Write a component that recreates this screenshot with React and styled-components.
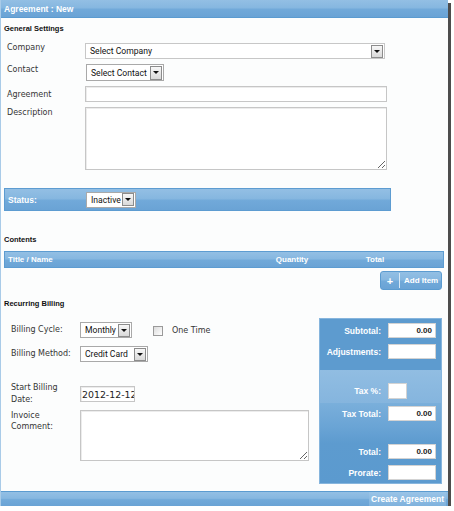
import React from 'react';
import styled, { createGlobalStyle } from 'styled-components';

const GlobalStyle = createGlobalStyle`
  html, body { margin: 0; padding: 0; background: #ffffff; }
  body { font-family: "DejaVu Sans", Verdana, sans-serif; }
  * { box-sizing: border-box; }
`;

const bar = `linear-gradient(to bottom, #93bfe4 0%, #86b7e0 45%, #71a9d9 55%, #6aa3d5 100%)`;

const Frame = styled.div`
  width: 448px;
  height: 506px;
  border-left: 1px solid #a9cbe8;
  background: #fcfdfd;
  display: flex;
  flex-direction: column;
  box-shadow: 3px 3px 0 #4d4d4d;
`;

const TitleBar = styled.div`
  flex: none;
  height: 18px;
  background: ${bar};
  border-bottom: 1px solid #5b9bd0;
  color: #fff;
  font: bold 8.5px "Liberation Sans", Arial, sans-serif;
  padding-left: 3px;
  display: flex;
  align-items: center;
`;

const Body = styled.div`
  flex: 1;
  display: flex;
  flex-direction: column;
  padding: 0 4px 0 3px;
`;

const SectionTitle = styled.div`
  margin-top: ${(p) => p.$mt}px;
  font: bold 7.5px "Liberation Sans", Arial, sans-serif;
  line-height: 10px;
  color: #111;
`;

const FieldRow = styled.div`
  display: flex;
  align-items: flex-start;
  margin-top: ${(p) => p.$mt}px;
  padding-left: ${(p) => p.$pl}px;
`;

const Label = styled.div`
  flex: none;
  width: ${(p) => p.$w}px;
  padding-top: ${(p) => p.$pt || 0}px;
  font-size: 8px;
  line-height: ${(p) => p.$lh || 10}px;
  color: #353535;
`;

const SelectBox = styled.div`
  flex: none;
  width: ${(p) => p.$w}px;
  height: ${(p) => p.$h || 16}px;
  margin-left: ${(p) => p.$ml || 0}px;
  border: 1px solid ${(p) => (p.$light ? '#c7c7c7' : '#a9a9a9')};
  background: #fff;
  display: flex;
  align-items: center;
  justify-content: space-between;
  padding: 0 1px 0 4px;
  font: 8.6px Roboto, "Liberation Sans", sans-serif;
  color: #111;
  white-space: nowrap;
  overflow: hidden;
`;

const ArrowBtn = styled.span`
  flex: none;
  width: 12px;
  height: ${(p) => p.$h || 13}px;
  border: 1px solid #8c8c8c;
  background: linear-gradient(to bottom, #f7f7f7, #d9d9d9);
  display: flex;
  align-items: center;
  justify-content: center;
  &::after {
    content: '';
    border-left: 3px solid transparent;
    border-right: 3px solid transparent;
    border-top: 3px solid #111;
  }
`;

const TextInput = styled.input`
  flex: none;
  width: ${(p) => p.$w}px;
  height: 16px;
  margin: ${(p) => p.$mt || 0}px 0 0 0;
  border: 1px solid #c6c6c6;
  box-shadow: inset 1px 1px 0 #ececec;
  background: #fff;
  padding: 0 0 0 1px;
  font: 9.4px "DejaVu Sans", Verdana, sans-serif;
  color: #222;
  outline: none;
`;

const TextArea = styled.textarea`
  flex: none;
  width: ${(p) => p.$w}px;
  height: ${(p) => p.$h}px;
  margin: 0;
  border: 1px solid #c6c6c6;
  box-shadow: inset 1px 1px 0 #ececec;
  background: #fff;
  outline: none;
`;

const StatusBar = styled.div`
  margin-top: 18px;
  width: 387px;
  height: 23px;
  border: 1px solid #5d9cd1;
  background: ${bar};
  display: flex;
  align-items: center;
  padding-left: 3px;
`;

const BarLabel = styled.span`
  flex: none;
  width: ${(p) => p.$w}px;
  color: #fff;
  font: bold 8.5px "Liberation Sans", Arial, sans-serif;
`;

const TableHead = styled.div`
  margin-top: 6px;
  height: 17px;
  border: 1px solid #5d9cd1;
  background: ${bar};
  display: grid;
  grid-template-columns: 252px 70px 13px 70px;
  align-items: center;
  color: #fff;
  font: bold 8px "Liberation Sans", Arial, sans-serif;
`;

const HeadCell = styled.span`
  text-align: ${(p) => p.$align || 'left'};
  padding-left: ${(p) => p.$pl || 0}px;
`;

const AddButton = styled.div`
  align-self: flex-end;
  margin: 3px 2px 0 0;
  width: 62px;
  height: 19px;
  border: 1px solid #5b9bd0;
  border-radius: 3px;
  background: ${bar};
  display: flex;
  align-items: center;
  color: #fff;
  font: bold 8px "Liberation Sans", Arial, sans-serif;
`;

const Plus = styled.span`
  width: 18px;
  text-align: center;
  font-size: 11px;
`;

const Divider = styled.span`
  width: 1px;
  height: 15px;
  background: #d7e8f6;
`;

const AddText = styled.span`
  padding-left: 4px;
  white-space: nowrap;
`;

const Billing = styled.div`
  margin-top: 9px;
  display: flex;
  align-items: flex-start;
`;

const BillingLeft = styled.div`
  flex: 1;
  display: flex;
  flex-direction: column;
`;

const CheckBox = styled.span`
  flex: none;
  width: 10px;
  height: 10px;
  margin: 4px 0 0 21px;
  border: 1px solid #9a9a9a;
  background: linear-gradient(135deg, #dcdcdc, #ffffff);
`;

const CheckLabel = styled.span`
  margin: 4px 0 0 9px;
  font-size: 8px;
  line-height: 10px;
  color: #353535;
`;

const Totals = styled.div`
  flex: none;
  width: 123px;
  height: 166px;
  margin-right: 2px;
  border: 1px solid #86b5dd;
  display: flex;
  flex-direction: column;
`;

const TotSection = styled.div`
  flex: none;
  height: ${(p) => p.$h}px;
  padding-top: ${(p) => p.$pt}px;
  background: ${(p) => p.$bg};
  display: flex;
  flex-direction: column;
`;

const TotRow = styled.div`
  display: flex;
  justify-content: flex-end;
  align-items: center;
  gap: 7px;
  padding-right: 5px;
  margin-top: ${(p) => p.$mt || 0}px;
`;

const TotLabel = styled.span`
  color: #fff;
  font: bold 8.5px "Liberation Sans", Arial, sans-serif;
`;

const TotInput = styled.div`
  width: ${(p) => p.$w || 48}px;
  height: ${(p) => p.$h || 15}px;
  margin-right: ${(p) => p.$mr || 0}px;
  background: #fff;
  border: 1px solid #d3d3d3;
  text-align: right;
  padding-right: 3px;
  font: bold 8px "Liberation Sans", Arial, sans-serif;
  line-height: 13px;
  color: #222;
`;

const Footer = styled.div`
  flex: none;
  height: 15px;
  background: ${bar};
  border-top: 1px solid #5b9bd0;
  display: flex;
  justify-content: flex-end;
`;

const CreateBtn = styled.div`
  height: 100%;
  padding: 0 2px;
  margin-right: 2px;
  background: linear-gradient(to bottom, #9ac4e7, #7fb2dd);
  color: #fff;
  font: bold 8.5px "Liberation Sans", Arial, sans-serif;
  display: flex;
  align-items: center;
`;

function Select({ text, w, h, ml, light, arrowH }) {
  return (
    <SelectBox $w={w} $h={h} $ml={ml} $light={light}>
      <span>{text}</span>
      <ArrowBtn $h={arrowH} />
    </SelectBox>
  );
}

export default function App() {
  return (
    <>
      <GlobalStyle />
      <Frame>
        <TitleBar>Agreement : New</TitleBar>
        <Body>
          <SectionTitle $mt={6}>General Settings</SectionTitle>
          <FieldRow $mt={9} $pl={3}>
            <Label $w={78}>Company</Label>
            <Select text="Select Company" w={300} light />
          </FieldRow>
          <FieldRow $mt={5} $pl={3}>
            <Label $w={78} $pt={1}>Contact</Label>
            <Select text="Select Contact" w={78} h={17} ml={1} arrowH={14} />
          </FieldRow>
          <FieldRow $mt={5} $pl={3}>
            <Label $w={78} $pt={4}>Agreement</Label>
            <TextInput $w={302} readOnly value="" />
          </FieldRow>
          <FieldRow $mt={5} $pl={3}>
            <Label $w={78} $pt={1}>Description</Label>
            <TextArea $w={302} $h={63} readOnly value="" />
          </FieldRow>

          <StatusBar>
            <BarLabel $w={78}>Status:</BarLabel>
            <Select text="Inactive" w={50} />
          </StatusBar>

          <SectionTitle $mt={24}>Contents</SectionTitle>
          <TableHead>
            <HeadCell $pl={3}>Title / Name</HeadCell>
            <HeadCell $align="center">Quantity</HeadCell>
            <span />
            <HeadCell $align="center">Total</HeadCell>
          </TableHead>
          <AddButton>
            <Plus>+</Plus>
            <Divider />
            <AddText>Add Item</AddText>
          </AddButton>

          <SectionTitle $mt={9}>Recurring Billing</SectionTitle>
          <Billing>
            <BillingLeft>
              <FieldRow $mt={4} $pl={7}>
                <Label $w={69} $pt={3}>Billing Cycle:</Label>
                <Select text="Monthly" w={52} />
                <CheckBox />
                <CheckLabel>One Time</CheckLabel>
              </FieldRow>
              <FieldRow $mt={8} $pl={7}>
                <Label $w={69} $pt={3}>Billing Method:</Label>
                <Select text="Credit Card" w={68} />
              </FieldRow>
              <FieldRow $mt={20} $pl={7}>
                <Label $w={69} $lh={12}>Start Billing<br />Date:</Label>
                <TextInput $w={55} $mt={4} readOnly value="2012-12-12" />
              </FieldRow>
              <FieldRow $mt={4} $pl={7}>
                <Label $w={69} $lh={11}>Invoice<br />Comment:</Label>
                <TextArea $w={229} $h={51} readOnly value="" />
              </FieldRow>
            </BillingLeft>
            <Totals>
              <TotSection $h={51} $pt={4} $bg="#5d9bcf">
                <TotRow>
                  <TotLabel>Subtotal:</TotLabel>
                  <TotInput>0.00</TotInput>
                </TotRow>
                <TotRow $mt={6}>
                  <TotLabel>Adjustments:</TotLabel>
                  <TotInput />
                </TotRow>
              </TotSection>
              <TotSection $h={33} $pt={13} $bg="linear-gradient(to bottom, #91bde2, #85b5de)">
                <TotRow>
                  <TotLabel>Tax %:</TotLabel>
                  <TotInput $w={19} $h={16} $mr={29} />
                </TotRow>
              </TotSection>
              <TotSection $h={80} $pt={3} $bg="linear-gradient(to bottom, #7aafdb 0%, #6aa4d5 30%, #5d9bcf 50%, #5b9acf 100%)">
                <TotRow>
                  <TotLabel>Tax Total:</TotLabel>
                  <TotInput>0.00</TotInput>
                </TotRow>
                <TotRow $mt={23}>
                  <TotLabel>Total:</TotLabel>
                  <TotInput>0.00</TotInput>
                </TotRow>
                <TotRow $mt={6}>
                  <TotLabel>Prorate:</TotLabel>
                  <TotInput />
                </TotRow>
              </TotSection>
            </Totals>
          </Billing>
        </Body>
        <Footer>
          <CreateBtn>Create Agreement</CreateBtn>
        </Footer>
      </Frame>
    </>
  );
}
